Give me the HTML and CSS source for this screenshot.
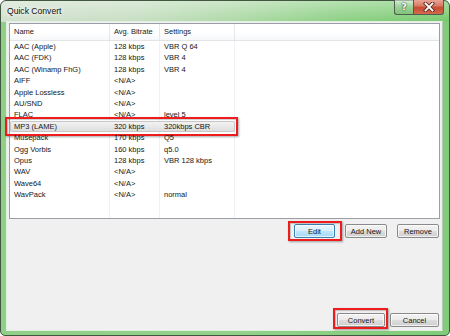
FILE: index.html
```html
<!DOCTYPE html>
<html>
<head>
<meta charset="utf-8">
<link rel="stylesheet" href="styles.css">
</head>
<body>
<div class="window">
  <div class="titlebar">
    <span class="title">Quick Convert</span>
    <div class="caption-buttons">
      <div class="cap help"><span>?</span></div>
      <div class="cap close">
        <svg width="12" height="10" viewBox="0 0 12 10">
          <path d="M2.5 1.5 L9.5 8.5 M9.5 1.5 L2.5 8.5" stroke="#5a2a22" stroke-width="3.6" stroke-linecap="square" fill="none"/>
          <path d="M2.5 1.5 L9.5 8.5 M9.5 1.5 L2.5 8.5" stroke="#ffffff" stroke-width="1.8" stroke-linecap="square" fill="none"/>
        </svg>
      </div>
    </div>
  </div>
  <div class="client">
    <div class="list">
      <div class="list-head">
        <div class="hcell c1">Name</div>
        <div class="hcell c2">Avg. Bitrate</div>
        <div class="hcell c3">Settings</div>
        <div class="hcell c4"></div>
      </div>
      <div class="list-body">
        <div class="row"><span>AAC (Apple)</span><span>128 kbps</span><span>VBR Q 64</span></div>
        <div class="row"><span>AAC (FDK)</span><span>128 kbps</span><span>VBR 4</span></div>
        <div class="row"><span>AAC (Winamp FhG)</span><span>128 kbps</span><span>VBR 4</span></div>
        <div class="row"><span>AIFF</span><span>&lt;N/A&gt;</span><span></span></div>
        <div class="row"><span>Apple Lossless</span><span>&lt;N/A&gt;</span><span></span></div>
        <div class="row"><span>AU/SND</span><span>&lt;N/A&gt;</span><span></span></div>
        <div class="row"><span>FLAC</span><span>&lt;N/A&gt;</span><span>level 5</span></div>
        <div class="row selected marked-row"><span>MP3 (LAME)</span><span>320 kbps</span><span>320kbps CBR</span></div>
        <div class="row"><span>Musepack</span><span>170 kbps</span><span>Q5</span></div>
        <div class="row"><span>Ogg Vorbis</span><span>160 kbps</span><span>q5.0</span></div>
        <div class="row"><span>Opus</span><span>128 kbps</span><span>VBR 128 kbps</span></div>
        <div class="row"><span>WAV</span><span>&lt;N/A&gt;</span><span></span></div>
        <div class="row"><span>Wave64</span><span>&lt;N/A&gt;</span><span></span></div>
        <div class="row"><span>WavPack</span><span>&lt;N/A&gt;</span><span>normal</span></div>
      </div>
    </div>
    <div class="btn-row top-row">
      <button class="btn default marked edit">Edit</button>
      <button class="btn">Add New</button>
      <button class="btn">Remove</button>
    </div>
    <div class="btn-row bottom-row">
      <button class="btn marked convert">Convert</button>
      <button class="btn cancel">Cancel</button>
    </div>
  </div>
</div>
</body>
</html>
```

FILE: styles.css
```css
* { box-sizing: border-box; }
html, body { margin: 0; padding: 0; }
body {
  width: 450px;
  height: 336px;
  background: #ffffff;
  font-family: "Liberation Sans", Arial, sans-serif;
  overflow: hidden;
}

.window {
  width: 450px;
  height: 336px;
  border: 1px solid #41573f;
  border-radius: 6px 6px 5px 5px;
  background:
    linear-gradient(180deg, rgba(255,255,255,0.35) 0px, rgba(255,255,255,0) 20px) 0 0 / 100% 21px no-repeat,
    linear-gradient(100deg, #d3e1d0 0%, #c8dfc4 30%, #acd9a5 55%, #8fd187 75%, #78ca70 100%) 0 0 / 100% 21px no-repeat,
    linear-gradient(90deg, #8fcf88 0%, #93d28c 50%, #80cc79 100%);
  display: flex;
  flex-direction: column;
  padding: 0 6px 4px 5px;
}

.titlebar {
  height: 20px;
  display: flex;
  align-items: flex-start;
  justify-content: space-between;
}
.title {
  margin-left: 1px;
  margin-top: 5px;
  font-size: 8.6px;
  color: #111111;
  text-shadow: 0 0 4px #ffffff, 0 0 6px #ffffff;
}
.caption-buttons {
  display: flex;
  margin-right: -1px;
  margin-top: -1px;
}
.cap {
  height: 15px;
  border: 1px solid #4d5e4c;
  border-top: none;
  display: flex;
  align-items: center;
  justify-content: center;
}
.help {
  width: 19px;
  border-radius: 0 0 0 3px;
  border-right: none;
  background: linear-gradient(180deg, rgba(255,255,255,0.55), rgba(150,200,145,0.5) 50%, rgba(120,185,115,0.6));
}
.help span {
  font-family: "DejaVu Sans", sans-serif;
  font-weight: bold;
  font-size: 9px;
  color: #ffffff;
  text-shadow: 0 0 1px #2f3f2e, 0 0 2px #2f3f2e;
  line-height: 1;
}
.close {
  width: 31px;
  border-radius: 0 0 3px 0;
  background: linear-gradient(180deg, #e9a597 0%, #d87b66 40%, #c44c32 55%, #d66a4c 100%);
}
.close svg { display: block; }

.client {
  flex: 1;
  background: #f0f0f0;
  border: 1px solid #c4d6c1;
  border-color: #e2f0df #b8c8b5 #e2f0df #e2f0df;
  padding: 1px 2px 3px 2px;
  display: flex;
  flex-direction: column;
}

.list {
  height: 196px;
  border: 1px solid #9a9ea6;
  background: #ffffff;
  display: flex;
  flex-direction: column;
}
.list-head {
  height: 17px;
  display: grid;
  grid-template-columns: 100px 50px 75px 1fr;
  background: linear-gradient(180deg, #ffffff 0%, #ffffff 55%, #f6f7f9 100%);
  border-bottom: 1px solid #e3e4e6;
}
.hcell {
  font-size: 7.5px;
  color: #1a1a1a;
  line-height: 16px;
  padding-left: 4px;
  border-right: 1px solid #e6e8ec;
  white-space: nowrap;
}
.hcell.c4 { border-right: none; }

.list-body {
  flex: 1;
  background:
    linear-gradient(#eef1f6, #eef1f6) 99px 0 / 1px 100% no-repeat,
    linear-gradient(#eef1f6, #eef1f6) 149px 0 / 1px 100% no-repeat,
    linear-gradient(#eef1f6, #eef1f6) 224px 0 / 1px 100% no-repeat,
    #ffffff;
}
.row {
  height: 11.4px;
  display: grid;
  grid-template-columns: 100px 50px 75px;
  font-size: 7.5px;
  line-height: 11.4px;
  color: #161616;
  white-space: nowrap;
  position: relative;
}
.row span { padding-left: 4px; overflow: hidden; }
.row.selected {
  background: linear-gradient(180deg, #f4f4f4 0%, #e6e6e6 60%, #dcdcdc 100%);
  box-shadow: inset 0 0 0 1px #c8c8c8;
  border-radius: 2px;
  width: 225px;
}
.marked-row::after {
  content: "";
  position: absolute;
  left: -5px;
  right: -3px;
  top: -4px;
  bottom: -4px;
  border: 2px solid #ee1c1c;
  box-shadow: 1px 1px 2px rgba(0,0,0,0.35), inset 1px 1px 1px rgba(0,0,0,0.2);
}

.btn-row {
  display: flex;
  justify-content: flex-end;
  padding-right: 1px;
}
.top-row { margin-top: 5px; gap: 10px; }
.bottom-row { margin-top: auto; gap: 5px; }

.btn {
  position: relative;
  width: 42px;
  height: 14px;
  padding: 0;
  font-family: "Liberation Sans", Arial, sans-serif;
  font-size: 7.5px;
  color: #161616;
  border: 1px solid #8a8a8a;
  border-radius: 2px;
  background: linear-gradient(180deg, #f3f3f3 0%, #ebebeb 48%, #dddddd 52%, #cfcfcf 100%);
  box-shadow: inset 0 0 0 1px rgba(255,255,255,0.7);
}
.btn.default {
  border-color: #3c7fb1;
  background: linear-gradient(180deg, #eaf6fd 0%, #d9f0fc 48%, #bee6fd 52%, #a7d9f5 100%);
}
.edit { width: 41px; }
.convert { width: 48px; }
.cancel { width: 49px; }

.marked::after {
  content: "";
  position: absolute;
  border: 2px solid #ee1c1c;
  box-shadow: 1px 1px 2px rgba(0,0,0,0.35), inset 1px 1px 1px rgba(0,0,0,0.2);
}
.edit.marked::after { left: -7px; right: -8px; top: -4px; bottom: -4px; }
.convert.marked::after { left: -5px; right: -4px; top: -6px; bottom: -3px; }
```
